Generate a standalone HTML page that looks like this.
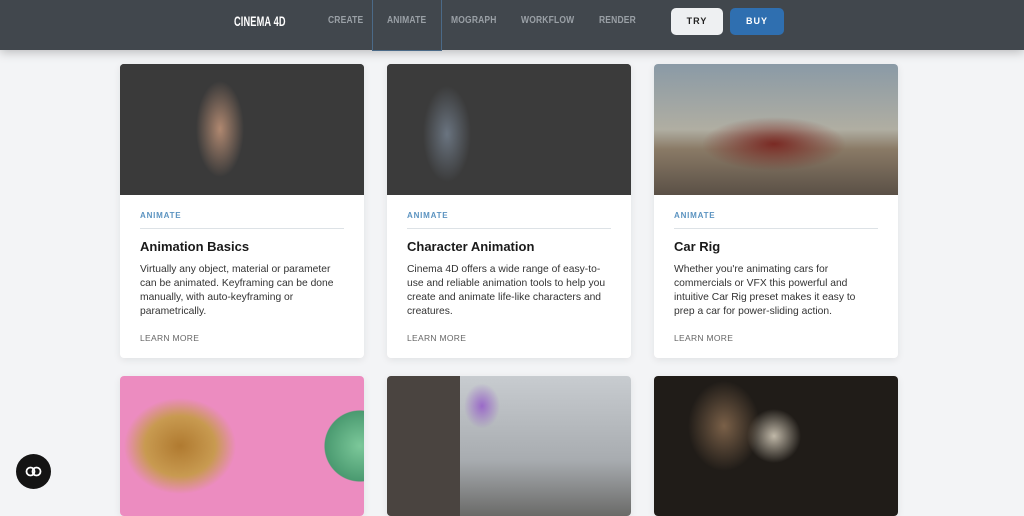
<!DOCTYPE html>
<html><head><meta charset="utf-8"><style>
*{margin:0;padding:0;box-sizing:border-box}
body{width:1024px;height:505px;overflow:hidden;background:#f3f4f6;font-family:"Liberation Sans",sans-serif;position:relative}
.nav{position:absolute;left:0;top:0;width:1024px;height:50px;background:#41474d;box-shadow:0 2px 10px rgba(0,0,0,.25);z-index:2}
.nav span{position:absolute;top:15px;font-size:10px;font-weight:bold;color:#9aa0a6;letter-spacing:.2px;transform:scaleX(.85);transform-origin:left}
.logo{left:234px;font-size:14px!important;color:#fff!important;top:13px!important;transform:scaleX(.66)!important}
.act{position:absolute;left:372px;top:0;width:70px;height:51px;border:1px solid #4b6a88;border-top:none}
.btn{position:absolute;top:8px;height:27px;border-radius:5px;font-size:9px;font-weight:bold;text-align:center;line-height:27px;letter-spacing:1px}
.card{position:absolute;width:244px;background:#fff;border-radius:4px;box-shadow:0 2px 8px rgba(0,0,0,.08);overflow:hidden}
.img{height:131px}
.c{padding:0 20px}
.tag{font-size:8px;font-weight:bold;color:#5b93c0;letter-spacing:.8px;margin-top:16px;padding-bottom:8px;border-bottom:1px solid #dde2e6}
h3{font-size:13px;margin-top:10px;color:#1a1a1a}
p{font-size:10.3px;line-height:14px;color:#333;margin-top:9px;height:56px}
.lm{font-size:8.5px;color:#666;margin-top:14px;letter-spacing:.3px}
</style></head><body>
<div class="nav">
<span class="logo">CINEMA 4D</span>
<span style="left:328px">CREATE</span>
<div class="act"></div>
<span style="left:387px">ANIMATE</span>
<span style="left:451px">MOGRAPH</span>
<span style="left:521px">WORKFLOW</span>
<span style="left:599px">RENDER</span>
<div class="btn" style="left:671px;width:52px;background:#eef0f2;color:#222">TRY</div>
<div class="btn" style="left:730px;width:54px;background:#2f6fb0;color:#fff">BUY</div>
</div>

<div class="card" style="left:120px;top:64px;height:294px"><div class="img" style="background:radial-gradient(ellipse 30px 60px at 100px 65px,#b08870,#3a3a3a 80%),#353535"></div><div class="c"><div class="tag">ANIMATE</div><h3>Animation Basics</h3><p>Virtually any object, material or parameter can be animated. Keyframing can be done manually, with auto-keyframing or parametrically.</p><div class="lm">LEARN MORE</div></div></div>

<div class="card" style="left:387px;top:64px;height:294px"><div class="img" style="background:radial-gradient(ellipse 30px 60px at 60px 70px,#6a7480,#3b3b3b 80%),radial-gradient(ellipse 30px 30px at 130px 70px,#c8c4bc,transparent 80%),#3a3a3a"></div><div class="c"><div class="tag">ANIMATE</div><h3>Character Animation</h3><p>Cinema 4D offers a wide range of easy-to-use and reliable animation tools to help you create and animate life-like characters and creatures.</p><div class="lm">LEARN MORE</div></div></div>

<div class="card" style="left:654px;top:64px;height:294px"><div class="img" style="background:radial-gradient(ellipse 80px 30px at 120px 80px,#7a2a24,transparent 90%),linear-gradient(#8a9aa6 0%,#b0aea2 50%,#8a7a66 65%,#5a5046 100%)"></div><div class="c"><div class="tag">ANIMATE</div><h3>Car Rig</h3><p>Whether you're animating cars for commercials or VFX this powerful and intuitive Car Rig preset makes it easy to prep a car for power-sliding action.</p><div class="lm">LEARN MORE</div></div></div>

<div class="card" style="left:120px;top:376px;height:140px"><div class="img" style="height:140px;background:radial-gradient(circle 50px at 240px 70px,#7cc89a,#4a9a70 70%,transparent 72%),radial-gradient(ellipse 70px 60px at 60px 70px,#b07a30,#c89a50 50%,transparent 80%),#ec8cc0"></div></div>

<div class="card" style="left:387px;top:376px;height:140px"><div class="img" style="height:140px;background:radial-gradient(ellipse 20px 25px at 95px 30px,#9a6ac8,transparent 90%),linear-gradient(90deg,#4a4440 0 30%,transparent 30%),linear-gradient(#c8ccd0 0%,#a8acb0 60%,#6a6a68 100%)"></div></div>

<div class="card" style="left:654px;top:376px;height:140px"><div class="img" style="height:140px;background:radial-gradient(ellipse 40px 50px at 70px 50px,#7a6048,transparent 90%),radial-gradient(ellipse 30px 30px at 120px 60px,#c0b8a8,transparent 90%),#201c18"></div></div>

<div style="position:absolute;left:16px;top:454px;width:35px;height:35px;border-radius:50%;background:#141414;z-index:3"><svg width="35" height="35" viewBox="0 0 35 35"><circle cx="14.5" cy="17.5" r="4" fill="none" stroke="#fff" stroke-width="1.8"/><circle cx="20.5" cy="17.5" r="4" fill="none" stroke="#fff" stroke-width="1.8"/></svg></div>
</body></html>
